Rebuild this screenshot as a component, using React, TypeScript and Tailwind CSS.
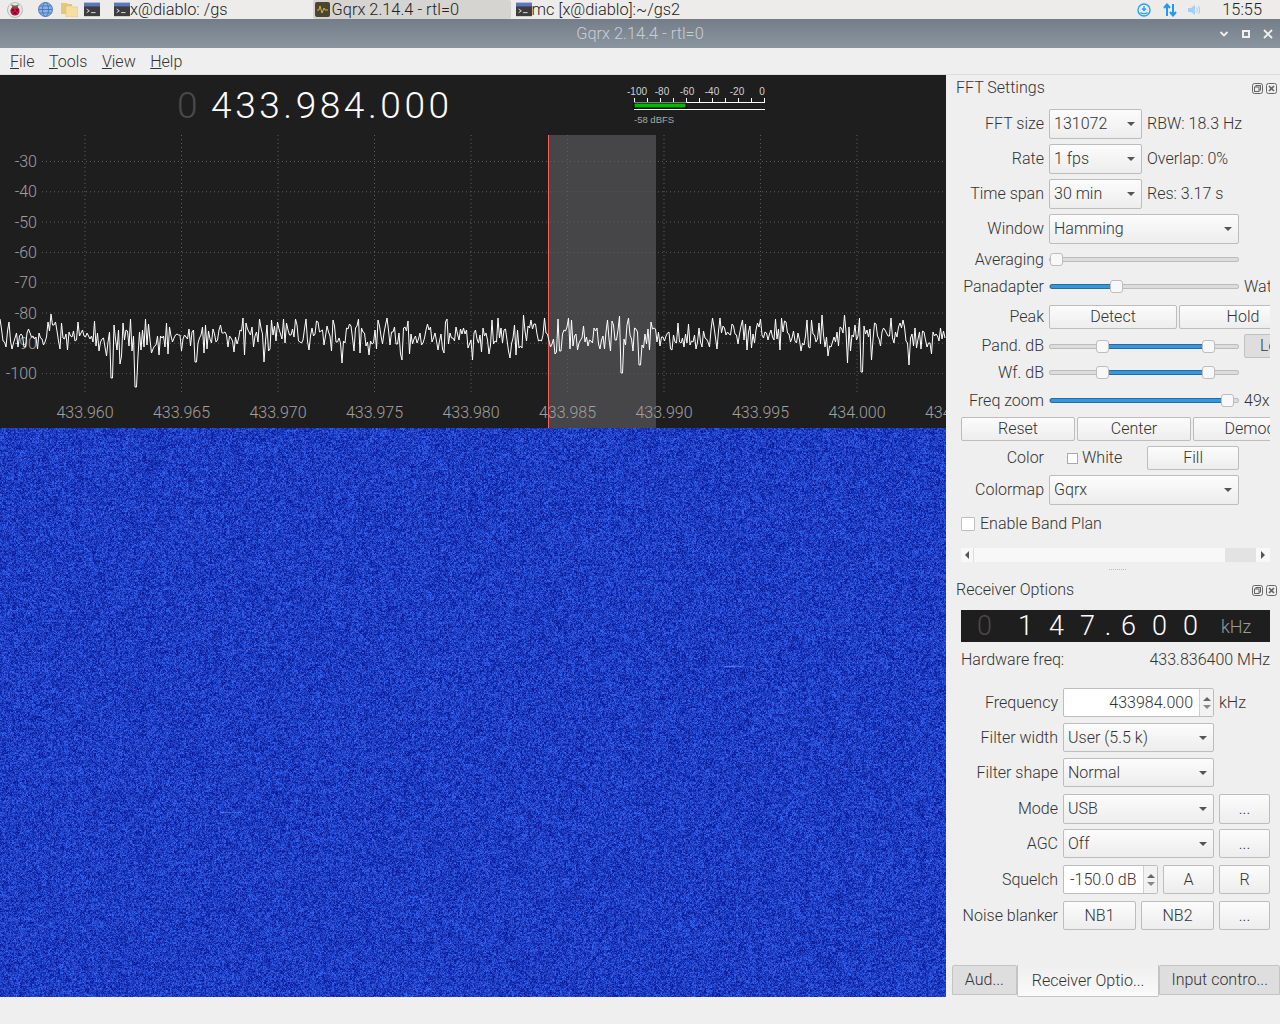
import { useEffect, useRef } from "react";

function rng(seed: number) {
  let s = seed;
  return () => {
    s = (s * 1664525 + 1013904223) >>> 0;
    return s / 4294967296;
  };
}

function tracePoints() {
  const r = rng(12345);
  const deep: Record<number, number> = { 38: 358, 112: 378, 136: 387, 196: 362, 264: 362, 402: 360, 510: 358, 622: 373, 734: 377, 862: 372, 640: 365, 770: 362, 926: 362 };
  const pts: string[] = [];
  for (let x = 0; x <= 946; x += 1.5) {
    let y = 336 + (r() + r() + r() - 1.5) * 19;
    if (r() < 0.06) y += r() * 14;
    if (r() < 0.05) y -= r() * 8;
    const k = deep[Math.floor(x)] ?? (x % 3 === 0 ? deep[x + 1] : undefined);
    if (k) y = k;
    pts.push(`${x},${Math.round(y)}`);
  }
  return pts.join(" ");
}

function Waterfall() {
  const ref = useRef<HTMLCanvasElement>(null);
  useEffect(() => {
    const c = ref.current;
    if (!c) return;
    const ctx = c.getContext("2d");
    if (!ctx) return;
    const w = c.width;
    const h = c.height;
    const img = ctx.createImageData(w, h);
    const r = rng(777);
    const cw = (w >> 1) + 2;
    const coarse = new Float32Array(cw * ((h >> 1) + 2));
    for (let i = 0; i < coarse.length; i++) coarse[i] = r();
    for (let y = 0; y < h; y++) {
      for (let x = 0; x < w; x++) {
        const n = r() * 0.6 + coarse[(y >> 1) * cw + (x >> 1)] * 0.4;
        const i = (y * w + x) * 4;
        const streak = x === 870 ? 0.1 : 0;
        const v = Math.min(1, Math.max(0, (n - 0.5) * 1.3 + 0.45 + streak));
        img.data[i] = 10 + v * 45;
        img.data[i + 1] = 28 + v * 72;
        img.data[i + 2] = 155 + v * 85;
        img.data[i + 3] = 255;
      }
    }
    ctx.putImageData(img, 0, 0);
    ctx.fillStyle = "rgba(110,160,255,0.45)";
    [[220, 384, 22], [724, 238, 20]].forEach(([x, y, l]) => ctx.fillRect(x, y, l, 1));
  }, []);
  return <canvas ref={ref} width={946} height={569} className="block w-[946px] h-[569px]" />;
}

function Plot() {
  const gridX = [85, 181.5, 278, 374.5, 471, 567.5, 664, 760.5, 857, 953.5];
  const labelsX = ["433.960", "433.965", "433.970", "433.975", "433.980", "433.985", "433.990", "433.995", "434.000", "434.005"];
  const gridY = [-30, -40, -50, -60, -70, -80, -90, -100];
  return (
    <svg width="946" height="293" viewBox="0 135 946 293" className="block bg-[#1f1e1f]">
      <rect x="549" y="135" width="107" height="293" fill="#464547" />
      {gridY.map((d, i) => (
        <line key={d} x1="42" x2="946" y1={161.5 + i * 30.3} y2={161.5 + i * 30.3} stroke="#5c5c5c" strokeDasharray="1 3" />
      ))}
      {gridX.map((x) => (
        <line key={x} x1={x} x2={x} y1="135" y2="395" stroke="#5c5c5c" strokeDasharray="1 3" />
      ))}
      {gridY.map((d, i) => (
        <text key={d} x="37" y={167 + i * 30.3} textAnchor="end" fill="#a0a0a0" fontSize="16" fontFamily="Roboto, sans-serif" fontWeight="300">{d}</text>
      ))}
      {labelsX.map((l, i) => (
        <text key={l} x={gridX[i]} y="418" textAnchor="middle" fill="#a0a0a0" fontSize="16" fontFamily="Roboto, sans-serif" fontWeight="300">{l}</text>
      ))}
      <line x1="548.5" x2="548.5" y1="135" y2="428" stroke="#ff5f5f" />
      <polyline points={tracePoints()} fill="none" stroke="#ffffff" strokeWidth="1" />
    </svg>
  );
}

function Meter() {
  const labels = ["-100", "-80", "-60", "-40", "-20", "0"];
  return (
    <svg width="150" height="50" viewBox="620 80 150 50" className="block">
      {labels.map((l, i) => (
        <text key={l} x={i === 5 ? 762 : 637 + i * 25} y="95" textAnchor="middle" fill="#d0d0d0" fontSize="10" fontFamily="Liberation Sans, sans-serif">{l}</text>
      ))}
      <line x1="634" x2="765" y1="102.5" y2="102.5" stroke="#fff" />
      {Array.from({ length: 11 }).map((_, i) => (
        <line key={i} x1={634.5 + i * 13} x2={634.5 + i * 13} y1="98" y2="102" stroke="#fff" />
      ))}
      <rect x="634" y="103" width="52" height="5" fill="#00b800" stroke="#000" />
      <line x1="634" x2="765" y1="109.5" y2="109.5" stroke="#fff" />
      <text x="634" y="123" fill="#a8a8a8" fontSize="9.5" fontFamily="Liberation Sans, sans-serif">-58 dBFS</text>
    </svg>
  );
}

const Caret = () => <span className="ml-auto mr-[6px] w-0 h-0 border-x-[4px] border-x-transparent border-t-[4px] border-t-[#555]" />;

function Combo({ w, text, h = "h-[30px]" }: { w: string; text: string; h?: string }) {
  return (
    <div className={`${w} ${h} shrink-0 flex items-center pl-[4px] border border-[#bdbdbd] rounded-[2px] bg-gradient-to-b from-[#fcfcfc] to-[#ededed]`}>
      <span>{text}</span>
      <Caret />
    </div>
  );
}

function Btn({ w, text, h = "h-[24px]" }: { w: string; text: string; h?: string }) {
  return (
    <div className={`${w} ${h} shrink-0 flex items-center justify-center border border-[#bdbdbd] rounded-[2px] bg-gradient-to-b from-[#fcfcfc] to-[#ededed] overflow-hidden whitespace-nowrap`}>
      {text}
    </div>
  );
}

function Slider({ from, to, handles }: { from: number; to: number; handles: number[] }) {
  return (
    <div className="w-[190px] h-[14px] relative flex items-center shrink-0">
      <div className="w-full h-[5px] rounded-[2px] bg-[#dcdcdc] border border-[#bcbcbc]" />
      {to > from && <div className="absolute h-[5px] rounded-[2px] bg-[#3a96d8] border border-[#1f6ea8]" style={{ left: from, width: to - from }} />}
      {handles.map((x) => (
        <div key={x} className="absolute w-[13px] h-[13px] rounded-[3px] border border-[#bdbdbd] bg-[#f8f8f8] top-[0.5px]" style={{ left: x }} />
      ))}
    </div>
  );
}

function DockTitle({ text }: { text: string }) {
  return (
    <div className="flex items-center h-[26px] pl-[10px] pr-[3px]">
      <span>{text}</span>
      <div className="ml-auto flex gap-[3px]">
        <svg width="11" height="11" viewBox="0 0 11 11" fill="none" stroke="#666"><rect x="0.5" y="0.5" width="10" height="10" rx="2" /><rect x="4" y="2.5" width="4.5" height="4.5" /><rect x="2.5" y="4" width="4.5" height="4.5" fill="#efefef" /></svg>
        <svg width="11" height="11" viewBox="0 0 11 11" fill="none" stroke="#666"><rect x="0.5" y="0.5" width="10" height="10" rx="2" /><path d="M3 3l5 5M8 3l-5 5" strokeWidth="1.6" /></svg>
      </div>
    </div>
  );
}

function Row({ label, lw, mt, h, children }: { label: string; lw: string; mt: string; h: string; children: React.ReactNode }) {
  return (
    <div className={`flex items-center gap-[5px] ${mt} ${h}`}>
      <div className={`${lw} shrink-0 text-right whitespace-nowrap`}>{label}</div>
      {children}
    </div>
  );
}

function Spin({ w, text, bw, right }: { w: string; text: string; bw: string; right?: boolean }) {
  return (
    <div className={`${w} h-[29px] shrink-0 flex border border-[#bdbdbd] rounded-[2px] bg-white`}>
      <div className={`flex-1 flex items-center ${right ? "justify-end pr-[6px]" : "pl-[6px]"} whitespace-nowrap`}>{text}</div>
      <div className={`${bw} border-l border-[#d0d0d0] bg-[#f2f2f2] flex flex-col items-center justify-center gap-[4px]`}>
        <span className="w-0 h-0 border-x-[4px] border-x-transparent border-b-[4px] border-b-[#666]" />
        <span className="w-0 h-0 border-x-[4px] border-x-transparent border-t-[4px] border-t-[#888]" />
      </div>
    </div>
  );
}

function Terminal({ x = 18 }: { x?: number }) {
  return (
    <svg width={x} height="15" viewBox="0 0 18 15">
      <rect width="18" height="15" fill="#3d3d3d" />
      <rect width="18" height="4" fill="#5b74c4" />
      <path d="M3 7l3 2-3 2" stroke="#eee" fill="none" />
      <path d="M8 11h5" stroke="#eee" />
    </svg>
  );
}

const lcdCells = ["1", "4", "7", ".", "6", "0", "0"];

export default function App() {
  return (
    <div className="w-[1280px] h-[1024px] overflow-hidden flex flex-col bg-[#efefef] text-[#333] text-[16px] font-light [font-family:Roboto,sans-serif]">
      {/* desktop panel */}
      <div className="h-[19px] bg-[#edecea] flex items-center text-[#222] text-[16.35px] shrink-0">
        <div className="ml-[7px] w-[16px] h-[16px] rounded-full bg-[#e8e8e8] border border-[#bbb] flex items-center justify-center">
          <svg width="12" height="13" viewBox="0 0 12 13">
            <circle cx="6" cy="8" r="4.6" fill="#b3123c" />
            <circle cx="6" cy="5.5" r="3" fill="#c8174a" />
            <path d="M2 1.5c2 0 3 1 4 2.5 1-1.500 2-2.500 4-2.500-.5 2-2 3-4 3s-3.500-1-4-3z" fill="#3f8f2f" />
            <circle cx="4" cy="7" r="1" fill="#5c0a20" /><circle cx="8" cy="7" r="1" fill="#5c0a20" /><circle cx="6" cy="10" r="1" fill="#5c0a20" />
          </svg>
        </div>
        <svg className="ml-[15px]" width="15" height="15" viewBox="0 0 15 15" fill="#8ab2e6" stroke="#3f6fb0" strokeWidth="0.8">
          <circle cx="7.500" cy="7.500" r="7" />
          <ellipse cx="7.500" cy="7.500" rx="3" ry="7" fill="none" />
          <path d="M0.500 7.500h14M1.500 4h12M1.500 11h12" fill="none" />
        </svg>
        <svg className="ml-[8px]" width="17" height="15" viewBox="0 0 17 15">
          <path d="M0 1h6l1 1h4v10H0z" fill="#e2c878" />
          <path d="M5 4h6l1 1h5v10H5z" fill="#f5dfa0" stroke="#d9be70" strokeWidth="0.5" />
        </svg>
        <span className="ml-[6px] flex"><Terminal x={16} /></span>
        <span className="ml-[14px] flex"><Terminal x={16} /></span>
        <span className="whitespace-nowrap pt-[1px]">x@diablo: /gs</span>
        <div className="ml-[85px] w-[198px] h-[19px] bg-[#d6d4d0] rounded-[2px] flex items-center pl-[2px] whitespace-nowrap">
          <svg width="15" height="15" viewBox="0 0 15 15" className="shrink-0">
            <rect width="15" height="15" rx="2" fill="#4b4632" />
            <path d="M2 8h2l1-4 2 7 2-5 1 2h3" stroke="#e0b030" fill="none" />
          </svg>
          <span className="ml-[2px] pt-[1px]">Gqrx 2.14.4 - rtl=0</span>
        </div>
        <span className="ml-[5px] flex"><Terminal x={16} /></span>
        <span className="whitespace-nowrap pt-[1px]">mc [x@diablo]:~/gs2</span>
        <div className="ml-auto flex items-center">
          <svg width="14" height="14" viewBox="0 0 14 14" fill="none" stroke="#29a3ef" strokeWidth="1.4">
            <circle cx="7" cy="7" r="6" />
            <path d="M7 3v4M5 5.500l2 2 2-2" />
            <path d="M3.500 9.500c1.500 1.500 5.500 1.500 7 0" />
          </svg>
          <svg className="ml-[12px]" width="14" height="14" viewBox="0 0 14 14" fill="none" stroke="#1f9af0" strokeWidth="2">
            <path d="M4 13V2M1 5l3-3.500L7 5" />
            <path d="M10 1v11M7 9l3 3.500L13 9" />
          </svg>
          <svg className="ml-[11px]" width="13" height="12" viewBox="0 0 13 12" fill="#9fd0f5">
            <path d="M0 4h3l4-3v10L3 8H0z" />
            <path d="M8.500 3.500c1 1.500 1 3.500 0 5M10.500 2c1.500 2.500 1.500 5.500 0 8" fill="none" stroke="#9fd0f5" />
          </svg>
          <span className="ml-[21px] mr-[18px] pt-[1px]">15:55</span>
        </div>
      </div>
      {/* title bar */}
      <div className="h-[29px] shrink-0 bg-gradient-to-b from-[#747e88] to-[#8b959f] flex items-center justify-center relative text-[#c8ced4] text-[16.35px] pt-[1px]">
        <span>Gqrx 2.14.4 - rtl=0</span>
        <div className="absolute right-[7px] top-[10px] flex items-center gap-[12px]">
          <svg width="10" height="10" viewBox="0 0 10 10" fill="none" stroke="#f0f0f0" strokeWidth="1.800"><path d="M1.500 3l3.500 3.500L8.500 3" /></svg>
          <svg width="10" height="10" viewBox="0 0 10 10" fill="none" stroke="#f0f0f0" strokeWidth="2"><rect x="2" y="2" width="6" height="6" /></svg>
          <svg width="10" height="10" viewBox="0 0 10 10" fill="none" stroke="#f0f0f0" strokeWidth="1.800"><path d="M1 1l8 8M9 1l-8 8" /></svg>
        </div>
      </div>
      {/* menu */}
      <div className="h-[27px] shrink-0 flex items-center pl-[10px] pt-[2px] gap-[14.5px] border-b border-[#dcdcdc]">
        <span><span className="underline">F</span>ile</span>
        <span><span className="underline">T</span>ools</span>
        <span><span className="underline">V</span>iew</span>
        <span><span className="underline">H</span>elp</span>
      </div>
      {/* main */}
      <div className="flex h-[949px] shrink-0">
        <div className="w-[946px] shrink-0 flex flex-col">
          <div className="h-[60px] shrink-0 bg-[#1f1e1f] flex">
            <div className="w-[620px] shrink-0 pl-[177px] pt-[9px] text-[37px] font-light leading-[44px] tracking-[3.55px] whitespace-nowrap text-white">
              <span className="text-[#4a4a4a] mr-[10px]">0</span>433.984.000
            </div>
            <div className="mt-[5px]"><Meter /></div>
          </div>
          <Plot />
          <Waterfall />
        </div>
        {/* right docks */}
        <div className="w-[334px] shrink-0 overflow-hidden">
          <DockTitle text="FFT Settings" />
          <div className="pl-[15px] w-[324px] overflow-hidden">
            <Row label="FFT size" lw="w-[83px]" mt="mt-[8px]" h="h-[30px]">
              <Combo w="w-[93px]" text="131072" /><span className="whitespace-nowrap">RBW: 18.3 Hz</span>
            </Row>
            <Row label="Rate" lw="w-[83px]" mt="mt-[5px]" h="h-[30px]">
              <Combo w="w-[93px]" text="1 fps" /><span className="whitespace-nowrap">Overlap: 0%</span>
            </Row>
            <Row label="Time span" lw="w-[83px]" mt="mt-[5px]" h="h-[30px]">
              <Combo w="w-[93px]" text="30 min" /><span className="whitespace-nowrap">Res: 3.17 s</span>
            </Row>
            <Row label="Window" lw="w-[83px]" mt="mt-[5px]" h="h-[30px]">
              <Combo w="w-[190px]" text="Hamming" />
            </Row>
            <Row label="Averaging" lw="w-[83px]" mt="mt-[3px]" h="h-[25px]">
              <Slider from={0} to={0} handles={[1]} />
            </Row>
            <Row label="Panadapter" lw="w-[83px]" mt="mt-[2px]" h="h-[25px]">
              <Slider from={1} to={66} handles={[61]} />
              <span className="whitespace-nowrap">Wat</span>
            </Row>
            <Row label="Peak" lw="w-[83px]" mt="mt-[6px]" h="h-[24px]">
              <Btn w="w-[128px]" text="Detect" />
              <div className="ml-[-3px] w-[128px] shrink-0"><Btn w="w-[128px]" text="Hold" /></div>
            </Row>
            <Row label="Pand. dB" lw="w-[83px]" mt="mt-[5px]" h="h-[24px]">
              <Slider from={54} to={160} handles={[47, 153]} />
              <div className="w-[40px] h-[24px] shrink-0 bg-[#dedede] border border-[#c0c0c0] rounded-[2px] pl-[15px] flex items-center">Lo</div>
            </Row>
            <Row label="Wf. dB" lw="w-[83px]" mt="mt-[2px]" h="h-[25px]">
              <Slider from={54} to={160} handles={[47, 153]} />
            </Row>
            <Row label="Freq zoom" lw="w-[83px]" mt="mt-[3px]" h="h-[25px]">
              <Slider from={1} to={175} handles={[172]} />
              <span className="whitespace-nowrap">49x</span>
            </Row>
            <div className="flex gap-[2px] mt-[4px] h-[24px]">
              <Btn w="w-[114px]" text="Reset" />
              <Btn w="w-[114px]" text="Center" />
              <Btn w="w-[114px]" text="Demod" />
            </div>
            <Row label="Color" lw="w-[83px]" mt="mt-[5px]" h="h-[24px]">
              <span className="ml-[18px] w-[11px] h-[11px] border border-[#aaa] bg-white shrink-0" />
              <span className="ml-[-1px]">White</span>
              <div className="ml-[20px]"><Btn w="w-[92px]" text="Fill" /></div>
            </Row>
            <Row label="Colormap" lw="w-[83px]" mt="mt-[5px]" h="h-[30px]">
              <Combo w="w-[190px]" text="Gqrx" />
            </Row>
            <div className="flex items-center gap-[5px] mt-[11px] h-[16px]">
              <span className="w-[14px] h-[14px] border border-[#c0c0c0] bg-white rounded-[1px]" />
              <span>Enable Band Plan</span>
            </div>
            <div className="mt-[16px] h-[14px] w-[309px] bg-[#f8f8f8] flex items-center">
              <div className="w-[13px] h-full border-r border-[#ddd] flex items-center justify-center">
                <span className="w-0 h-0 border-y-[4px] border-y-transparent border-r-[4px] border-r-[#555]" />
              </div>
              <div className="ml-auto w-[31px] h-full bg-[#e3e3e3]" />
              <div className="w-[14px] h-full flex items-center justify-center">
                <span className="w-0 h-0 border-y-[4px] border-y-transparent border-l-[4px] border-l-[#555]" />
              </div>
            </div>
          </div>
          <div className="h-[13px] mt-[1px] flex items-center justify-center pl-[8px]">
            <span className="w-[17px] border-t border-dotted border-[#bbb]" />
          </div>
          <div className="mt-[1px]"><DockTitle text="Receiver Options" /></div>
          <div className="pl-[15px] w-[324px]">
            <div className="mt-[7px] pt-[1px] h-[32px] w-[309px] bg-[#1f1e1f] flex items-center text-[27px] font-light text-white whitespace-nowrap">
              <span className="ml-[8px] w-[31px] text-center text-[#4a4a4a]">0</span>
              <span className="ml-[10px] flex">
                {lcdCells.map((c, i) => (
                  <span key={i} className={c === "." ? "w-[10px] text-center" : "w-[31px] text-center"}>{c}</span>
                ))}
              </span>
              <span className="ml-[15px] text-[18px] font-light text-[#9a9a9a]">kHz</span>
            </div>
            <div className="flex justify-between h-[19px] mt-[8px] items-center">
              <span>Hardware freq:</span><span>433.836400 MHz</span>
            </div>
            <Row label="Frequency" lw="w-[97px]" mt="mt-[19px]" h="h-[29px]">
              <Spin w="w-[151px]" text="433984.000" bw="w-[14px]" right />
              <span>kHz</span>
            </Row>
            <Row label="Filter width" lw="w-[97px]" mt="mt-[6px]" h="h-[29px]">
              <Combo w="w-[151px]" h="h-[29px]" text="User (5.5 k)" />
            </Row>
            <Row label="Filter shape" lw="w-[97px]" mt="mt-[6px]" h="h-[29px]">
              <Combo w="w-[151px]" h="h-[29px]" text="Normal" />
            </Row>
            <Row label="Mode" lw="w-[97px]" mt="mt-[7px]" h="h-[30px]">
              <Combo w="w-[151px]" h="h-[30px]" text="USB" /><Btn w="w-[51px]" h="h-[30px]" text="..." />
            </Row>
            <Row label="AGC" lw="w-[97px]" mt="mt-[5px]" h="h-[29px]">
              <Combo w="w-[151px]" h="h-[29px]" text="Off" /><Btn w="w-[51px]" h="h-[29px]" text="..." />
            </Row>
            <Row label="Squelch" lw="w-[97px]" mt="mt-[7px]" h="h-[29px]">
              <Spin w="w-[95px]" text="-150.0 dB" bw="w-[14px]" />
              <Btn w="w-[51px]" h="h-[29px]" text="A" />
              <Btn w="w-[51px]" h="h-[29px]" text="R" />
            </Row>
            <Row label="Noise blanker" lw="w-[97px]" mt="mt-[7px]" h="h-[29px]">
              <Btn w="w-[73px]" h="h-[29px]" text="NB1" />
              <Btn w="w-[73px]" h="h-[29px]" text="NB2" />
              <Btn w="w-[51px]" h="h-[29px]" text="..." />
            </Row>
          </div>
          <div className="flex mt-[35px] pl-[6px] items-start">
            <div className="w-[65px] h-[30px] flex items-center justify-center bg-[#dedede] border border-[#c4c4c4] rounded-t-[2px]">Aud...</div>
            <div className="w-[143px] h-[32px] flex items-center justify-center bg-gradient-to-b from-[#efefef] to-[#fafafa] border-x border-b border-[#c4c4c4] rounded-b-[2px]">Receiver Optio...</div>
            <div className="w-[121px] h-[30px] flex items-center justify-center bg-[#dedede] border border-[#c4c4c4] rounded-t-[2px] whitespace-nowrap">Input contro...</div>
          </div>
        </div>
      </div>
    </div>
  );
}
